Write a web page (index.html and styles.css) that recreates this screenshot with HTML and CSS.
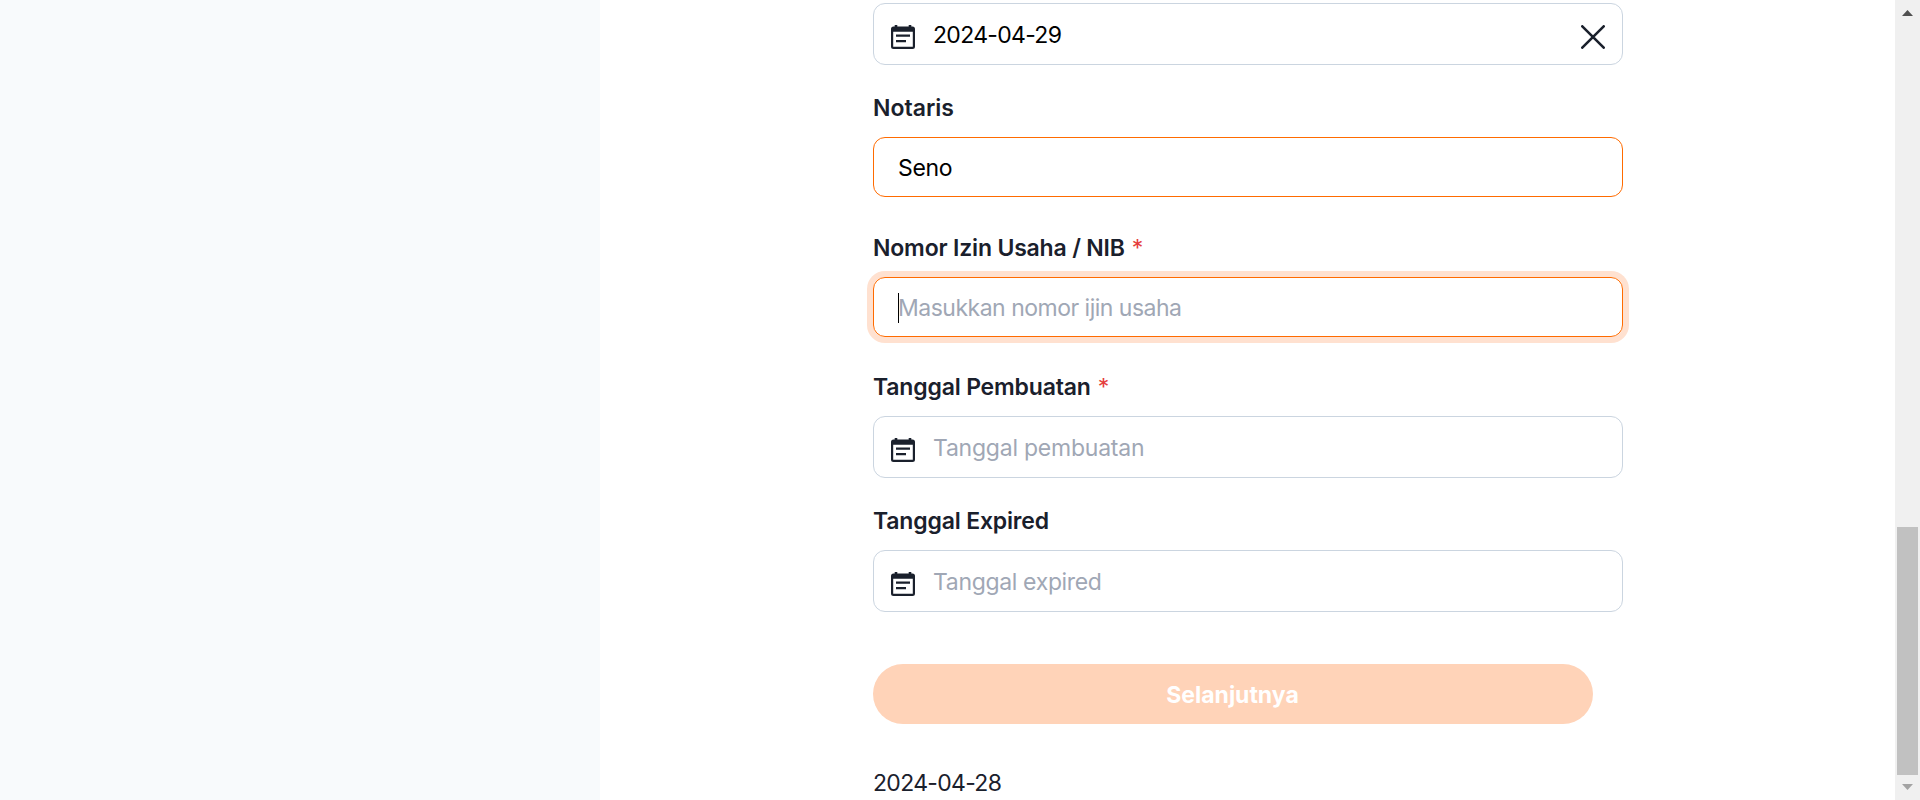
FILE: index.html
```
<!DOCTYPE html>
<html lang="id">
<head>
<meta charset="utf-8">
<title>Form</title>
<link rel="stylesheet" href="styles.css">
</head>
<body>
<svg width="0" height="0" class="defs">
  <symbol id="calendar" viewBox="0 0 24 24">
    <path fill-rule="evenodd" d="M3.700 0h2.600v1.500h11.400V0h2.600v1.500H21.500a2.500 2.500 0 0 1 2.500 2.500V21.500a2.500 2.500 0 0 1-2.500 2.500H2.500a2.500 2.500 0 0 1-2.500-2.500V4a2.500 2.500 0 0 1 2.500-2.500H3.700zM2.200 6.700V21.800H21.800V6.700zM5 9.500H19v2.200H5zM5 15H15v2.200H5z"/>
  </symbol>
</svg>
<div class="page">
  <aside class="sidebar"></aside>
  <main class="content">
    <form class="form">
      <div class="input date"><svg class="icon"><use href="#calendar"/></svg><span class="value digits">2024-04-29</span><svg class="close" viewBox="0 0 24 24"><path d="M1.300 1.300 22.700 22.700M22.700 1.300 1.300 22.700"/></svg></div>
      <div class="label after-date"><span>Notaris</span></div>
      <div class="input active"><span class="value name">Seno</span></div>
      <div class="label after-text"><span class="snug">Nomor Izin Usaha / NIB</span><span class="star">*</span></div>
      <div class="input active focus"><i class="caret"></i><span class="placeholder wide">Masukkan nomor ijin usaha</span></div>
      <div class="label after-focus"><span class="snug">Tanggal Pembuatan</span><span class="star">*</span></div>
      <div class="input date"><svg class="icon"><use href="#calendar"/></svg><span class="placeholder created">Tanggal pembuatan</span></div>
      <div class="label after-date"><span class="snug">Tanggal Expired</span></div>
      <div class="input date"><svg class="icon"><use href="#calendar"/></svg><span class="placeholder expired">Tanggal expired</span></div>
      <button class="submit" type="button">Selanjutnya</button>
      <div class="note digits">2024-04-28</div>
    </form>
  </main>
  <div class="scrollbar">
    <svg class="arrow up" viewBox="0 0 11 6"><path d="M0 6 5.500 0 11 6z"/></svg>
    <div class="thumb"></div>
    <svg class="arrow down" viewBox="0 0 11 6"><path d="M0 0 5.500 6 11 0z"/></svg>
  </div>
</div>
</body>
</html>
```
FILE: styles.css
```
* { box-sizing: border-box; }
html, body { height: 800px; overflow: hidden; }
body { margin: 0; background: #fff; font-family: Inter, "Liberation Sans", sans-serif; font-size: 23px; line-height: 36px; color: #1a202c; }
.defs { position: absolute; }
.page { display: flex; height: 800px; overflow: hidden; }
.sidebar { width: 600px; background: #f8fafc; }
.content { flex: 1; height: 800px; overflow: hidden; padding: 3px 0 0 273px; }
.form { width: 750px; }
.input { display: flex; align-items: center; height: 60px; padding: 1px 24px 0; border: 1px solid #cbd5e0; border-radius: 12px; white-space: nowrap; }
.input.date { height: 62px; padding: 1px 17px 0; }
.input.active { border-color: #ff6b00; }
.input.focus { box-shadow: 0 0 0 6px #ffe1d0; }
.icon { width: 24px; height: 24px; margin: 5px 18px 0 0; fill: #1a202c; }
.close { width: 24px; height: 24px; margin: 5px 0 0 auto; fill: none; stroke: #1a202c; stroke-width: 2.6; stroke-linecap: round; }
.value { color: #000; }
.placeholder { color: #a0a7b5; }
.digits { letter-spacing: -0.68px; }
.name { letter-spacing: -0.3px; }
.snug { letter-spacing: -0.18px; }
.wide { letter-spacing: -0.5px; }
.created { letter-spacing: -0.23px; }
.expired { letter-spacing: -0.34px; }
.caret { width: 1px; height: 30px; margin-right: -1px; background: #000; }
.label { display: flex; height: 36px; margin-bottom: 11px; font-weight: 600; white-space: nowrap; }
.after-date { margin-top: 25px; }
.after-text { margin-top: 33px; }
.after-focus { margin-top: 32px; }
.star { margin-left: 7px; color: #e53e3e; font-weight: 400; }
.submit { display: flex; align-items: center; justify-content: center; width: 720px; height: 60px; margin: 52px 0 41px; padding: 1px 1px 0 0; border: 0; border-radius: 30px; background: #ffd3b8; color: #fff; font: inherit; font-weight: 700; }
.note { white-space: nowrap; }
.scrollbar { display: flex; flex-direction: column; align-items: center; width: 25px; height: 800px; padding: 10px 0; background: #f0f0f0; }
.arrow { width: 11px; height: 6px; }
.up { fill: #505050; }
.down { fill: #a3a3a3; margin-top: 9px; }
.thumb { width: 21px; height: 248px; margin-top: 511px; background: #c1c1c1; }
```
